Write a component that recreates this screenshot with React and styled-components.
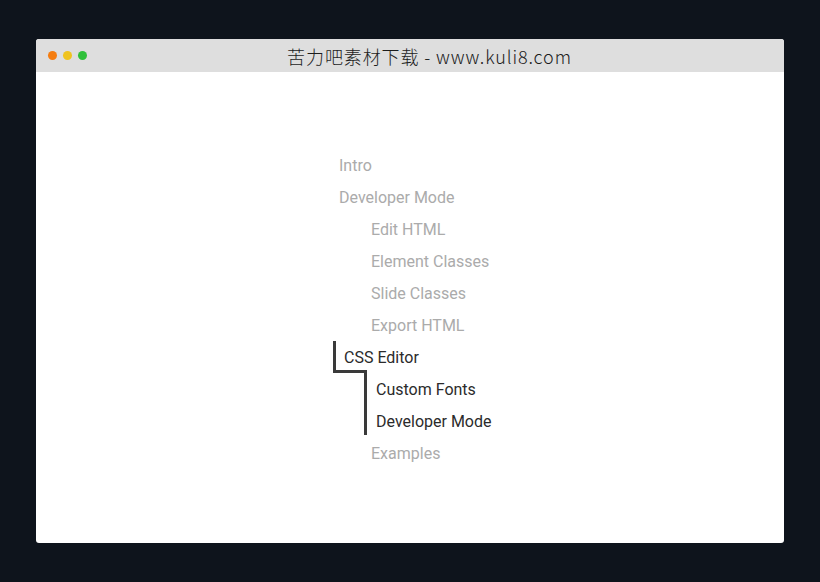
import React from "react";
import styled, { createGlobalStyle } from "styled-components";

const GlobalStyle = createGlobalStyle`
  html, body {
    margin: 0;
    padding: 0;
    background: #0e141c;
  }
`;

const nav = [
  { label: "Intro" },
  {
    label: "Developer Mode",
    children: ["Edit HTML", "Element Classes", "Slide Classes", "Export HTML"],
  },
  {
    label: "CSS Editor",
    active: true,
    children: ["Custom Fonts", "Developer Mode"],
  },
  { label: "Examples", sub: true },
];

const App = () => {
  return (
    <>
      <GlobalStyle />
      <Page>
        <Window>
          <TitleBar>
            <Dots>
              <Dot color="#f57d10" />
              <Dot color="#efc31f" />
              <Dot color="#2fc03a" />
            </Dots>
            <Title>苦力吧素材下载 - www.kuli8.com</Title>
          </TitleBar>
          <Content>
            <Menu>
              {nav.map((item, i) => (
                <Group key={i} active={item.active} sub={item.sub}>
                  <Link active={item.active}>{item.label}</Link>
                  {item.children && (
                    <SubMenu>
                      {item.children.map((c, j) => (
                        <Group key={j}>
                          <Link active={item.active}>{c}</Link>
                        </Group>
                      ))}
                    </SubMenu>
                  )}
                </Group>
              ))}
            </Menu>
          </Content>
        </Window>
      </Page>
    </>
  );
};

const Page = styled.div`
  width: 820px;
  height: 582px;
  padding: 39px 36px 0;
  box-sizing: border-box;
`;

const Window = styled.div`
  width: 748px;
  height: 504px;
  background: #fff;
  border-radius: 3px;
  overflow: hidden;
  display: flex;
  flex-direction: column;
`;

const TitleBar = styled.div`
  height: 33px;
  background: #dedede;
  display: flex;
  align-items: center;
  position: relative;
`;

const Dots = styled.div`
  display: flex;
  gap: 6px;
  padding-left: 12px;
`;

const Dot = styled.span`
  width: 9px;
  height: 9px;
  border-radius: 50%;
  background: ${(p) => p.color};
`;

const Title = styled.div`
  flex: 1;
  text-align: center;
  padding-right: 12px;
  font-family: "Noto Sans CJK SC", "DejaVu Sans", sans-serif;
  font-weight: 300;
  font-size: 18px;
  color: #1c1c1c;
  letter-spacing: 0.9px;
`;

const Content = styled.div`
  flex: 1;
  padding: 78px 0 0 297px;
`;

const Menu = styled.ul`
  list-style: none;
  margin: 0;
  padding: 0;
  font-family: Roboto, "Liberation Sans", sans-serif;
  font-size: 16px;
`;

const SubMenu = styled.ul`
  list-style: none;
  margin: 0;
  padding: 0 0 0 32px;
`;

const Group = styled.li`
  position: relative;
  padding-left: ${(p) => (p.sub ? "32px" : "0")};

  ${(p) =>
    p.active &&
    `
    &::before {
      content: "";
      position: absolute;
      left: 0;
      top: -1px;
      width: 31px;
      height: 29px;
      border-left: 3px solid #3a3a3a;
      border-bottom: 3px solid #3a3a3a;
    }
    &::after {
      content: "";
      position: absolute;
      left: 31px;
      top: 28px;
      width: 3px;
      height: 65px;
      background: #3a3a3a;
    }
  `}
`;

const Link = styled.div`
  height: 32px;
  line-height: 32px;
  padding-left: ${(p) => (p.active ? "11px" : "6px")};
  color: ${(p) => (p.active ? "#2b2b2b" : "#ababab")};
  white-space: nowrap;
`;

export default App;
